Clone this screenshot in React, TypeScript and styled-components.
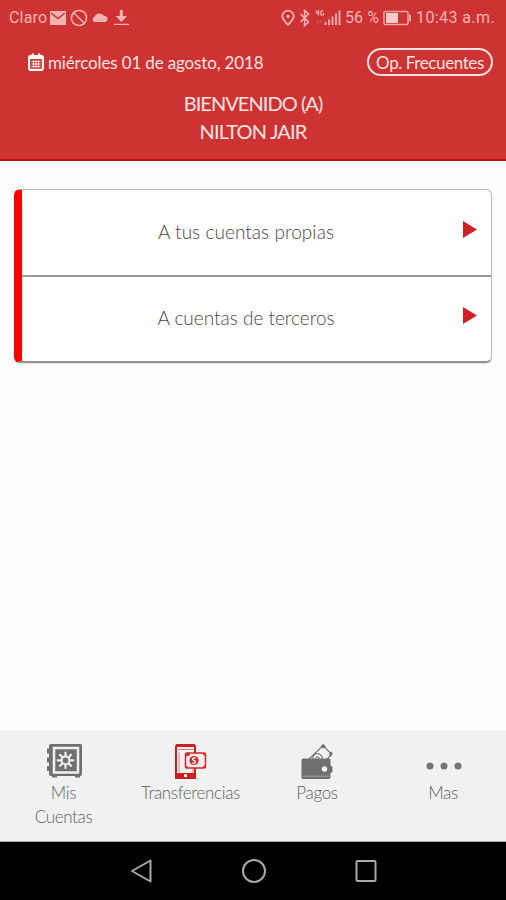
import React from "react";
import styled, { createGlobalStyle } from "styled-components";

const GlobalStyle = createGlobalStyle`
  * { box-sizing: border-box; }
  body { margin: 0; background: #fff; }
  button { font: inherit; color: inherit; background: none; border: 0; padding: 0; margin: 0; }
`;

const Screen = styled.div`
  width: 506px;
  height: 900px;
  display: flex;
  flex-direction: column;
  overflow: hidden;
  background: #fefefe;
  font-family: Lato, "Liberation Sans", sans-serif;
`;

const Header = styled.header`
  height: 161px;
  background: #cd3333;
  border-bottom: 2px solid #c40d0d;
  color: #fde3e1;
`;

const StatusBar = styled.div`
  height: 36px;
  padding: 0 11px 0 9px;
  display: flex;
  align-items: center;
  justify-content: space-between;
  font: 400 16px/36px Roboto, sans-serif;
  color: #f4b3b3;
`;

const StatusGroup = styled.div<{ $gap: number }>`
  display: flex;
  align-items: center;
  gap: ${(p) => p.$gap}px;
  height: 36px;
`;

const StatusText = styled.span<{ $spacing?: number }>`
  letter-spacing: ${(p) => p.$spacing ?? 0}px;
  white-space: nowrap;
`;

const InfoRow = styled.div`
  height: 52px;
  padding: 0 13px 0 28px;
  display: flex;
  align-items: center;
  justify-content: space-between;
`;

const DateLabel = styled.div`
  display: flex;
  align-items: center;
  gap: 4px;
  font-size: 17px;
  letter-spacing: -0.15px;
  white-space: nowrap;
`;

const Pill = styled.button`
  width: 126px;
  height: 28px;
  border: 2px solid #fde0e0;
  border-radius: 14px;
  font-size: 17px;
  line-height: 25px;
  letter-spacing: -0.4px;
  white-space: nowrap;
`;

const Welcome = styled.div`
  padding-top: 1px;
  display: flex;
  flex-direction: column;
  align-items: center;
`;

const WelcomeLine = styled.div<{ $spacing: number }>`
  font-size: 20px;
  line-height: 28px;
  letter-spacing: ${(p) => p.$spacing}px;
`;

const Content = styled.main`
  flex: 1;
  padding: 28px 14px 0;
`;

const Options = styled.div`
  height: 174px;
  display: flex;
  flex-direction: column;
  border: 1px solid #bbb;
  border-left: 8px solid #fe0000;
  border-bottom: 2px solid #929292;
  border-radius: 6px;
  background: #fff;
  box-shadow: 0 1px 2px rgba(0, 0, 0, 0.12);
`;

const Option = styled.button`
  flex: 1;
  display: grid;
  grid-template-columns: 448px 14px;
  align-items: center;
  color: #484848;
  & + & { border-top: 2px solid #9a9a9a; }
`;

const OptionLabel = styled.span<{ $spacing: number }>`
  font-size: 19px;
  font-weight: 300;
  line-height: 24px;
  letter-spacing: ${(p) => p.$spacing}px;
  text-align: center;
  padding-bottom: 1px;
`;

const Arrow = styled.svg`
  display: block;
  margin: 0 0 6px -7px;
`;

const TabBar = styled.nav`
  height: 112px;
  padding: 11px 0 0;
  display: grid;
  grid-template-columns: 127px 127px 126px 126px;
  background: #f1f1f1;
  border-bottom: 1px solid #aaa;
`;

const Tab = styled.button`
  display: flex;
  flex-direction: column;
  align-items: center;
  color: #5e5e5e;
`;

const TabLabel = styled.span`
  font-size: 17px;
  font-weight: 300;
  line-height: 24px;
  letter-spacing: -0.35px;
  white-space: pre-line;
`;

const TabIcon = styled.svg`
  display: block;
  margin-bottom: 2px;
  flex: none;
`;

const SystemBar = styled.footer`
  height: 58px;
  background: #000;
  display: flex;
  align-items: center;
  justify-content: space-between;
  padding: 0 128px 0 129px;
`;

const StatusIconsLeft = () => (
  <svg width="82" height="20" viewBox="50 8 82 20" fill="#f4b3b3">
    <path d="M51 11h16v14H51z" />
    <path d="M52 13l7 5.5 7-5.5" fill="none" stroke="#cd3333" strokeWidth="1.4" />
    <g fill="none" stroke="#f4b3b3" strokeWidth="1.5">
      <circle cx="80" cy="18" r="7.6" />
      <path d="M74.500 12.700l11 10.600" />
    </g>
    <path d="M95.500 22a2.700 2.700 0 0 1 0-5.200 5.500 5.500 0 0 1 9.700-.8 3.200 3.200 0 0 1 1.800 6z" />
    <path d="M120.800 10h3v6h4.200l-5.700 6-5.700-6h4.200zM115 23.700h15V25h-15z" />
  </svg>
);

const StatusIconsRight = () => (
  <svg width="61" height="20" viewBox="280 8 61 20" fill="none" stroke="#f4b3b3">
    <path d="M288 25c-3.300-3.600-5.700-6.200-5.700-8.700a5.700 5.700 0 0 1 11.400 0c0 2.500-2.400 5.100-5.700 8.700z" strokeWidth="1.800" />
    <circle cx="288" cy="16.300" r="1.600" fill="#f4b3b3" stroke="none" />
    <path d="M300.500 14l8 8-3.900 3.500V10.500l3.900 3.500-8 8" strokeWidth="1.600" />
    <path d="M316.500 10.500v2.700h3M318.500 10v5.500M323.500 11h-2.500v4h2.500v-2" strokeWidth="1.200" />
    <path d="M325.500 22v3M329 19.500V25M332.500 16.500V25M336 13.500V25M339.500 10.500V25" strokeWidth="1.800" />
    <path d="M317.500 20.500v2M320.500 20.500v2" strokeWidth="1.100" opacity=".45" />
  </svg>
);

const Battery = () => (
  <svg width="29" height="16" viewBox="0 0 29 16">
    <rect x="1" y="1.500" width="24" height="13" rx="1" fill="none" stroke="#f4a2a2" strokeWidth="1.500" />
    <path d="M3 3h12v10H3z" fill="#f8caca" />
    <path d="M26 4.500h2v7h-2z" fill="#f4a2a2" />
  </svg>
);

const Calendar = () => (
  <svg width="16" height="18" viewBox="0 0 16 18">
    <rect x="1.100" y="3.100" width="13.800" height="13.800" rx="1.300" fill="none" stroke="#fff" strokeWidth="2.100" />
    <path d="M1 3h14v3H1zM3.700.5h2.200V5H3.700zM10.100.5h2.200V5h-2.200z" fill="#fff" />
    <path d="M3.500 8.300h9M3.500 11h9M3.500 13.600h9M5.500 7.500v7M8 7.500v7M10.500 7.500v7" stroke="#fff" strokeWidth=".9" />
  </svg>
);

const SafeIcon = () => (
  <TabIcon width="38" height="38" viewBox="45 741 38 38">
    <path d="M51 744h29.500a1.500 1.500 0 0 1 1.500 1.500V774a2 2 0 0 1-1.500 2H80v1.500h-5V776H57v1.500h-5V776h-1a2 2 0 0 1-2-2V746a2 2 0 0 1 2-2z" fill="#707070" />
    <path d="M54 748h24v24.500H54z" fill="none" stroke="#f1f1f1" strokeWidth="2.500" />
    <path d="M47 748.500h3v5h-3zM47 757.500h3v5h-3zM47 766h3v5h-3z" fill="#707070" />
    <path d="M65.500 752.500v15.600M57.700 760.300h15.600M60 754.800l11 11M60 765.800l11-11" stroke="#f1f1f1" strokeWidth="2.200" strokeLinecap="round" />
    <circle cx="65.500" cy="760.300" r="3.900" fill="#707070" stroke="#f1f1f1" strokeWidth="2" />
  </TabIcon>
);

const TransferIcon = () => (
  <TabIcon width="38" height="38" viewBox="172 741 38 38">
    <rect x="176" y="745" width="19" height="33" rx="2" fill="#f1f1f1" stroke="#cd1f1f" strokeWidth="2" />
    <path d="M176 744h19v3h-19zM175 773h21v6h-21z" fill="#cd1f1f" />
    <path d="M178 749.500h15.500" stroke="#dc7777" strokeWidth="1" />
    <path d="M179 752.500v20M193 769v4" stroke="#dc7777" strokeWidth="1" />
    <path d="M184 774.300h3v2.700h-3z" fill="#fff" />
    <rect x="185.500" y="753" width="20" height="15" rx="1.500" fill="#f6eeee" stroke="#cf2929" strokeWidth="1.500" />
    <path d="M185.700 753h4v2.600l-4 1zM205 753v3l-3-2.500zM185.700 768v-3l3 2.500zM205 768v-3l-3 2.500z" fill="#cf2929" />
    <circle cx="194" cy="760.500" r="4.600" fill="#cf2929" />
    <path d="M195.600 758.200c-1.600-1.100-3.400 0-2.800 1.500.5 1.300 2.900.8 2.700 2.500-.2 1.300-2 1.400-3.200.6" fill="none" stroke="#fff" strokeWidth="1.300" />
  </TabIcon>
);

const WalletIcon = () => (
  <TabIcon width="38" height="38" viewBox="298 741 38 38">
    <path d="M307 761l16-15.500 8.500 8.500-7.500 9z" fill="#f1f1f1" stroke="#747474" strokeWidth="1.200" />
    <path d="M320.300 747l2.700-3.200 3 3-2.800 1.800zM329 753.500l3-2 .5 3-2.300 2.500z" fill="#707070" />
    <circle cx="317.500" cy="758.500" r="4.800" fill="none" stroke="#747474" strokeWidth="1.200" />
    <path d="M316 761v-4h3v4" fill="none" stroke="#747474" strokeWidth="1" />
    <path d="M303 758.500h26a1.500 1.500 0 0 1 1.500 1.500v17a2 2 0 0 1-2 2H303a1.500 1.500 0 0 1-1.500-1.500V760a1.500 1.500 0 0 1 1.500-1.500z" fill="#707070" />
    <path d="M303 776.200h26" stroke="#a5a5a5" strokeWidth="1" />
    <path d="M330 765.500a2.500 2.500 0 0 1 2.500 2.500v2.500a2.500 2.500 0 0 1-2.500 2.500h-6v-7.500z" fill="#707070" />
    <circle cx="324.500" cy="769" r="2.700" fill="#fafafa" />
  </TabIcon>
);

const MoreIcon = () => (
  <TabIcon width="38" height="38" viewBox="425 741 38 38" fill="#747474">
    <circle cx="431" cy="766" r="3.500" />
    <circle cx="445" cy="766" r="3.500" />
    <circle cx="459" cy="766" r="3.500" />
  </TabIcon>
);

const OptionItem = ({ label, spacing }: { label: string; spacing: number }) => (
  <Option>
    <OptionLabel $spacing={spacing}>{label}</OptionLabel>
    <Arrow width="14" height="17" viewBox="0 0 14 17">
      <path d="M0 0l14 8.500L0 17z" fill="#cd2027" />
    </Arrow>
  </Option>
);

export default function App() {
  return (
    <Screen>
      <GlobalStyle />
      <Header>
        <StatusBar>
          <StatusGroup $gap={2}>
            <StatusText $spacing={0.2}>Claro</StatusText>
            <StatusIconsLeft />
          </StatusGroup>
          <StatusGroup $gap={4}>
            <StatusIconsRight />
            <StatusText $spacing={0.1}>56 %</StatusText>
            <Battery />
            <StatusText $spacing={0.4}>10:43 a.m.</StatusText>
          </StatusGroup>
        </StatusBar>
        <InfoRow>
          <DateLabel>
            <Calendar />
            <span>miércoles 01 de agosto, 2018</span>
          </DateLabel>
          <Pill>Op. Frecuentes</Pill>
        </InfoRow>
        <Welcome>
          <WelcomeLine $spacing={-0.95}>BIENVENIDO (A)</WelcomeLine>
          <WelcomeLine $spacing={-0.85}>NILTON JAIR</WelcomeLine>
        </Welcome>
      </Header>
      <Content>
        <Options>
          <OptionItem label="A tus cuentas propias" spacing={0.05} />
          <OptionItem label="A cuentas de terceros" spacing={0} />
        </Options>
      </Content>
      <TabBar>
        <Tab>
          <SafeIcon />
          <TabLabel>{"Mis\nCuentas"}</TabLabel>
        </Tab>
        <Tab>
          <TransferIcon />
          <TabLabel>Transferencias</TabLabel>
        </Tab>
        <Tab>
          <WalletIcon />
          <TabLabel>Pagos</TabLabel>
        </Tab>
        <Tab>
          <MoreIcon />
          <TabLabel>Mas</TabLabel>
        </Tab>
      </TabBar>
      <SystemBar>
        <svg width="24" height="26" viewBox="0 0 24 26" fill="none" stroke="#aaa" strokeWidth="2">
          <path d="M21.500 2.500v21L3 13z" strokeLinejoin="round" />
        </svg>
        <svg width="26" height="26" viewBox="0 0 26 26" fill="none" stroke="#aaa" strokeWidth="2">
          <circle cx="13" cy="13" r="11" />
        </svg>
        <svg width="24" height="24" viewBox="0 0 24 24" fill="none" stroke="#aaa" strokeWidth="2">
          <rect x="2.500" y="2" width="19" height="20" rx="1" />
        </svg>
      </SystemBar>
    </Screen>
  );
}
